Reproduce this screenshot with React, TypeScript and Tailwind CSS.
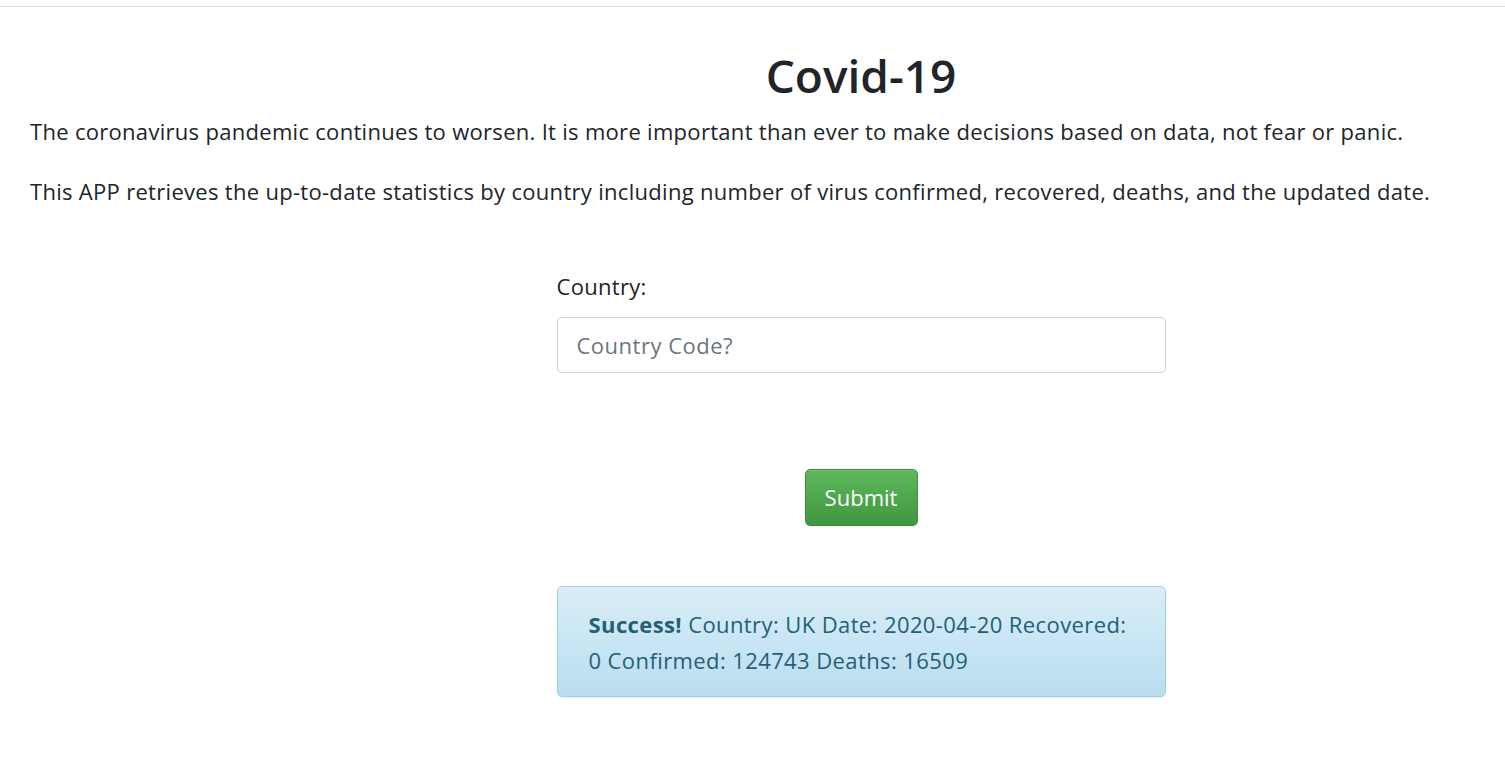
import React from "react";

export default function App() {
  return (
    <div
      className="w-full min-h-[780px] bg-white overflow-hidden text-[#212529]"
      style={{ fontFamily: '"Open Sans", "Noto Sans", sans-serif' }}
    >
      <div className="h-[6px]" />
      <div className="w-[1722px] border-t border-[#dedede]">
        <div className="px-[30px] pt-[38px]">
          <h1 className="text-center text-[46px] leading-[60px] font-semibold mb-[11px]">
            Covid-19
          </h1>
          <p className="text-[22px] leading-[30px] tracking-[0.3px] mb-[30px]">
            The coronavirus pandemic continues to worsen. It is more important than ever to make decisions based on
            data, not fear or panic.
          </p>
          <p className="text-[22px] leading-[30px] tracking-[0.3px]">
            This APP retrieves the up-to-date statistics by country including number of virus confirmed, recovered,
            deaths, and the updated date.
          </p>
        </div>
        <div className="w-[609px] mx-auto mt-[66px]">
          <label className="block text-[22px] leading-[28px] tracking-[0.3px] mb-[17px]">Country:</label>
          <input
            className="block w-full h-[56px] border border-[#ccd1d6] rounded-[5px] px-[19px] text-[22px] tracking-[0.5px] placeholder:text-[#6c757d] outline-none"
            placeholder="Country Code?"
          />
          <div className="flex justify-center mt-[96px]">
            <button className="h-[57px] w-[113px] rounded-[5px] border border-[#3e8f3e] bg-gradient-to-b from-[#5cb85c] to-[#419641] text-white text-[22px] shadow-[inset_0_1px_0_rgba(255,255,255,0.15),0_1px_1px_rgba(0,0,0,0.075)]">
              Submit
            </button>
          </div>
          <div className="mt-[60px] border border-[#9acfea] rounded-[5px] bg-gradient-to-b from-[#d9edf7] to-[#b9def0] px-[31px] pt-[19px] pb-[18px] text-[22px] leading-[36px] tracking-[0.4px] text-[#245f74] shadow-[inset_0_1px_0_rgba(255,255,255,0.25),0_1px_2px_rgba(0,0,0,0.05)]">
            <strong className="font-bold">Success!</strong> Country: UK Date: 2020-04-20 Recovered: 0 Confirmed: 124743
            Deaths: 16509
          </div>
        </div>
      </div>
    </div>
  );
}
